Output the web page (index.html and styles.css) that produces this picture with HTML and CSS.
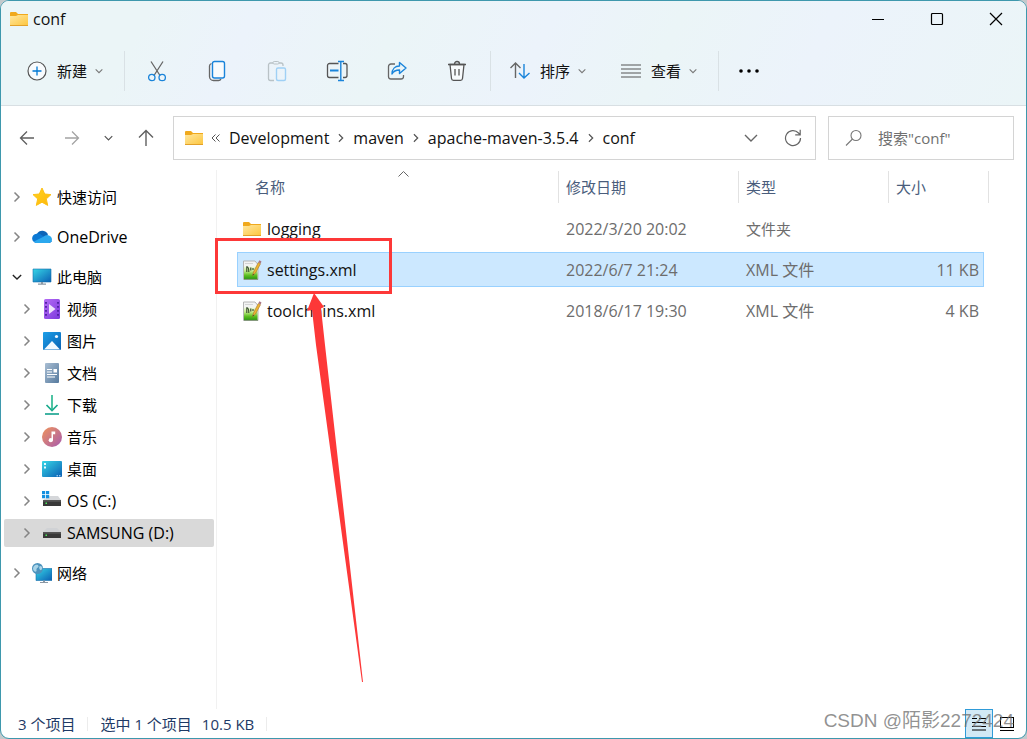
FILE: index.html
```
<!DOCTYPE html>
<html lang="zh-CN">
<head>
<meta charset="utf-8">
<meta name="viewport" content="width=device-width, initial-scale=1">
<title>conf</title>
<link rel="stylesheet" href="styles.css">
</head>
<body>
<svg class="defs" width="0" height="0" aria-hidden="true">
  <defs>
    <linearGradient id="gFolder" x1="0" y1="0" x2="1" y2="1"><stop offset="0" stop-color="#ffe7a0"/><stop offset="1" stop-color="#fdc63e"/></linearGradient>
    <linearGradient id="gStar" x1="0" y1="0" x2="1" y2="1"><stop offset="0" stop-color="#ffd51f"/><stop offset="1" stop-color="#feb50c"/></linearGradient>
    <linearGradient id="gScreen" x1="0" y1="0" x2="1" y2="1"><stop offset="0" stop-color="#36d6e6"/><stop offset="1" stop-color="#0b5fb4"/></linearGradient>
    <linearGradient id="gVideo" x1="0" y1="0" x2="1" y2="1"><stop offset="0" stop-color="#b56cf5"/><stop offset="1" stop-color="#7b38dc"/></linearGradient>
    <linearGradient id="gPic" x1="0" y1="0" x2="1" y2="1"><stop offset="0" stop-color="#1d9fe8"/><stop offset="1" stop-color="#0962b4"/></linearGradient>
    <linearGradient id="gDoc" x1="0" y1="0" x2="1" y2="1"><stop offset="0" stop-color="#a9bed3"/><stop offset="1" stop-color="#567a9e"/></linearGradient>
    <linearGradient id="gMusic" x1="0" y1="0" x2="1" y2="1"><stop offset="0" stop-color="#f0945a"/><stop offset="1" stop-color="#a75bb0"/></linearGradient>
    <linearGradient id="gGrass" x1="0" y1="0" x2="0" y2="1"><stop offset="0" stop-color="#eff8e0"/><stop offset="0.350" stop-color="#c3ea8c"/><stop offset="0.700" stop-color="#5fc022"/><stop offset="1" stop-color="#2c9a10"/></linearGradient>
    <symbol id="folder" viewBox="0 0 18 14"><path d="M0 1a1 1 0 0 1 1-1h5l2 2h10v4H0z" fill="#f0a91d"/><path d="M0 4h6l2-1h10v10.500H0z" fill="url(#gFolder)"/><path d="M0 13h18v1H0z" fill="#e2a12a"/></symbol>
    <symbol id="right" viewBox="0 0 10 12"><path d="M2.500 1.500 7 6l-4.500 4.500" fill="none" stroke="currentColor" stroke-width="1.500"/></symbol>
    <symbol id="down" viewBox="0 0 12 8"><path d="M1 1.500 6 6.500l5-5" fill="none" stroke="currentColor" stroke-width="1.600"/></symbol>
    <symbol id="xml" viewBox="0 0 20 20"><path d="M1.500 1h11.500l3 3.500V19.500H1.500z" fill="#f3f3f3" stroke="#b5b5b5"/><path d="M2 6.500h13.500v12.500H2z" fill="url(#gGrass)"/><path d="M2 19.300h14" stroke="#6b8b60" stroke-width=".8"/><path d="M3 3.500h8" stroke="#ccc" stroke-width=".8"/><path d="M4.800 12V6.800c2 0 2 2 2 5.200M8.800 7.500v3M11 8v2" stroke="#33482a" stroke-width="1.100" fill="none"/><path d="m10.500 15.500 1-3.500L16.300 2.500l2.200 1.200-5 9.300z" fill="#eeb533" stroke="#a87628" stroke-width=".6"/><path d="m16.200 2.300 1.300-2 2 1.100-.9 2.200z" fill="#a97786"/><path d="m10.500 15.500.6-1.800 1 .6z" fill="#333"/></symbol>
    <symbol id="drive" viewBox="0 0 20 20"><path d="M5 5h10l4 4H1z" fill="#d0d2d5"/><path d="M1 9h18v6H1z" fill="#393939"/><path d="M1 9h18v1.800H1z" fill="#555"/><path d="M3.500 11.500H5V13H3.500z" fill="#4dec5c"/></symbol>
  </defs>
</svg>
<div class="window">
  <header class="chrome">
    <div class="titlebar">
      <svg class="folder"><use href="#folder"/></svg>
      <h1 class="title">conf</h1>
      <div class="controls">
        <button aria-label="最小化"><svg width="14" height="14"><path d="M1 7.500h12" stroke="#000"/></svg></button>
        <button aria-label="最大化"><svg width="14" height="14"><rect x="1.500" y="1.500" width="11" height="11" rx="1" fill="none" stroke="#000" stroke-width="1.200"/></svg></button>
        <button aria-label="关闭"><svg width="14" height="14"><path d="m1 1 12 12M13 1 1 13" stroke="#000" stroke-width="1.200"/></svg></button>
      </div>
    </div>
    <div class="toolbar">
      <button class="command"><svg width="20" height="20" fill="none"><circle cx="10" cy="10" r="9" fill="#f8fbfd" stroke="#555" stroke-width="1.200"/><path d="M10 5.500v9M5.500 10h9" stroke="#0078d4" stroke-width="1.300"/></svg><span>新建</span><svg class="caret"><use href="#down"/></svg></button>
      <div class="tools">
        <button aria-label="剪切"><svg width="20" height="22" fill="none"><path d="m4 1.500 9 14M16 1.500 7 15.500" stroke="#666" stroke-width="1.300"/><circle cx="4.800" cy="17.500" r="3.200" stroke="#1a84da" stroke-width="1.300"/><circle cx="15.200" cy="17.500" r="3.200" stroke="#1a84da" stroke-width="1.300"/></svg></button>
        <button aria-label="复制"><svg width="18" height="22" fill="none"><path d="M3.500 3.500C2 4 1.500 5 1.500 6v10.500a4 4 0 0 0 4 4h5c1 0 2-.5 2.500-1.500" stroke="#666" stroke-width="1.300"/><rect x="4.500" y="1.500" width="12" height="16.500" rx="2" fill="#f8fbfd" stroke="#1a84da" stroke-width="1.400"/></svg></button>
        <button aria-label="粘贴"><svg width="20" height="22" fill="none"><path d="M6 3H3.500a2 2 0 0 0-2 2v13.500a2 2 0 0 0 2 2H7M12 3h2a2 2 0 0 1 2 2v1" stroke="#b9c2c6" stroke-width="1.300"/><rect x="6" y="1.500" width="6" height="2.500" rx="1.200" stroke="#b9c2c6"/><rect x="9.500" y="8" width="9" height="12.500" rx="1.500" stroke="#9fd0f5" stroke-width="1.400"/></svg></button>
        <button aria-label="重命名"><svg width="22" height="22" fill="none"><path d="M12.500 3.500H3.500a2 2 0 0 0-2 2v10a2 2 0 0 0 2 2h9M17 3.500h2a2 2 0 0 1 2 2v10a2 2 0 0 1-2 2h-2" stroke="#555" stroke-width="1.300"/><path d="M4 10.500h8.500" stroke="#1a84da" stroke-width="2"/><path d="M12 1.500h6M12 20.500h6M14.800 1.500v19" stroke="#1a84da" stroke-width="1.400"/></svg></button>
        <button aria-label="共享"><svg width="20" height="22" fill="none"><path d="M8 4H4a2.500 2.500 0 0 0-2.500 2.500v10A2.500 2.500 0 0 0 4 19h10a2.500 2.500 0 0 0 2.500-2.500V15" stroke="#666" stroke-width="1.300"/><path d="M12.500 2.500 19 8l-6.500 5.500V10C9 10 6.500 11 5 14c0-5 3-8 7.500-8z" stroke="#1a84da" stroke-width="1.400" stroke-linejoin="round"/></svg></button>
        <button aria-label="删除"><svg width="20" height="22" fill="none"><path d="M3 4.500h14l-1.500 14a2 2 0 0 1-2 1.800h-7a2 2 0 0 1-2-1.800z" fill="#f8fbfd" stroke="#555" stroke-width="1.300"/><path d="M1 4.500h18M7.500 4a2.500 2.500 0 0 1 5 0M8 9v6.500M12 9v6.500" stroke="#555" stroke-width="1.300"/></svg></button>
      </div>
      <div class="menus">
        <button class="command"><svg width="20" height="20" fill="none"><path d="M5.500 17V2M.500 7l5-5 5 5" stroke="#666" stroke-width="1.400"/><path d="M14 3v14M9 12l5 5 5.500-5" stroke="#1a84da" stroke-width="1.400"/></svg><span>排序</span><svg class="caret"><use href="#down"/></svg></button>
        <button class="command"><svg width="20" height="20"><path d="M0 4h20M0 8h20M0 12h20M0 16h20" stroke="#555" stroke-width="1.100"/></svg><span>查看</span><svg class="caret"><use href="#down"/></svg></button>
      </div>
      <button class="more" aria-label="更多"><svg width="20" height="6"><circle cx="2" cy="3" r="1.800"/><circle cx="10" cy="3" r="1.800"/><circle cx="18" cy="3" r="1.800"/></svg></button>
    </div>
  </header>

  <div class="navbar">
    <button class="wide" aria-label="后退"><svg width="16" height="16" fill="none"><path d="M15 8H1.500M8 1.500 1.500 8 8 14.500" stroke="#5f5f5f" stroke-width="1.300"/></svg></button>
    <button class="wide" aria-label="前进"><svg width="16" height="16" fill="none"><path d="M1 8h13.500M8 1.500 14.500 8 8 14.500" stroke="#a3a3a3" stroke-width="1.300"/></svg></button>
    <button class="narrow" aria-label="最近位置"><svg class="recent" width="9" height="6"><use href="#down"/></svg></button>
    <button class="wide" aria-label="向上"><svg width="16" height="18" fill="none"><path d="M8 17V1.500M1 8.500l7-7 7 7" stroke="#5f5f5f" stroke-width="1.400"/></svg></button>
    <div class="address">
      <svg class="folder"><use href="#folder"/></svg>
      <svg class="back-mark" width="9" height="8" fill="none"><path d="M4.500.5 1 4l3.500 3.500M8.500.5 5 4l3.500 3.500" stroke="#555"/></svg>
      <nav class="crumbs" aria-label="路径">
        <a href="#">Development</a><svg class="sep"><use href="#right"/></svg><a href="#">maven</a><svg class="sep"><use href="#right"/></svg><a href="#">apache-maven-3.5.4</a><svg class="sep"><use href="#right"/></svg><a href="#">conf</a>
      </nav>
      <button aria-label="历史记录"><svg width="14" height="9"><path d="m1 1 6 6 6-6" fill="none" stroke="#666" stroke-width="1.400"/></svg></button>
      <button aria-label="刷新"><svg width="18" height="18" fill="none"><path d="M16.500 9A7.500 7.500 0 1 1 14.500 4l1.500 1.500M16.200.8v5h-5" stroke="#666" stroke-width="1.200"/></svg></button>
    </div>
    <label class="search">
      <svg width="18" height="18" fill="none"><circle cx="11" cy="6.500" r="5" stroke="#777" stroke-width="1.100"/><path d="m7.500 10-6.500 6.500" stroke="#777" stroke-width="1.100"/></svg>
      <input type="text" placeholder="搜索&quot;conf&quot;" aria-label="搜索">
    </label>
  </div>

  <div class="content">
    <nav class="tree" aria-label="导航窗格">
      <a href="#"><svg class="arrow"><use href="#right"/></svg><svg class="icon" viewBox="0 0 20 20"><path d="m10 1 2.700 6 6.300.6-4.700 4.300 1.400 6.500L10 15.200l-5.700 3.200 1.400-6.500L1 7.600 7.300 7z" fill="url(#gStar)" stroke="#fdc016" stroke-linejoin="round"/></svg><span>快速访问</span></a>
      <a href="#" class="latin"><svg class="arrow"><use href="#right"/></svg><svg class="icon" viewBox="0 0 20 20"><path d="M5 7a6 6 0 0 1 11 1l-5 6H3z" fill="#0b64b8"/><path d="M4.500 6.800c2-.5 3.500 0 5 1.200L20 14c-.8 1.500-2 2-3.500 2H5a4.600 4.600 0 0 1-.5-9.200z" fill="#0c79d4"/><path d="M2 14.500 11.500 9.800c2-1.800 4-1.800 5.500-1.300 3 1 3.500 4 2.500 5.800-.7 1.200-1.700 1.700-3 1.700H5c-1.300 0-2.200-.5-3-1.500z" fill="#2ba8ee"/></svg><span>OneDrive</span></a>
      <a href="#" class="open"><svg class="arrow"><use href="#down"/></svg><svg class="icon" viewBox="0 0 20 20"><path d="M1 2h18v13H1z" fill="url(#gScreen)" stroke="#1671ac" stroke-width=".6"/><path d="M9 15h2v2H9zM6 16.500h8v1.300H6z" fill="#8a98a5"/></svg><span>此电脑</span></a>
      <div class="children">
        <a href="#"><svg class="arrow"><use href="#right"/></svg><svg class="icon" viewBox="0 0 20 20"><rect x="2" y="0" width="16" height="20" rx="1.500" fill="url(#gVideo)"/><path d="M4 3v15M16 3v15" stroke="#4b1f9e" stroke-width="1.800" stroke-dasharray="1.800 2.200"/><path d="m7 5 6.500 5L7 15z" fill="#efe4fb"/></svg><span>视频</span></a>
        <a href="#"><svg class="arrow"><use href="#right"/></svg><svg class="icon" viewBox="0 0 20 20"><rect x="1" y="1" width="18" height="18" rx="1" fill="url(#gPic)"/><path d="M2 18.500 10 10l8 8.500z" fill="#f2f9ff"/><circle cx="14.500" cy="5.500" r="1.600" fill="#f2f9ff"/></svg><span>图片</span></a>
        <a href="#"><svg class="arrow"><use href="#right"/></svg><svg class="icon" viewBox="0 0 20 20"><rect x="3" y="0" width="14" height="20" rx="1" fill="url(#gDoc)"/><path d="M5 6.500h5M5 9h5M5 11.500h10M5 14h8" stroke="#fff" stroke-width="1.100"/><path d="M11.500 6H15v3.500h-3.500z" fill="#fff"/></svg><span>文档</span></a>
        <a href="#"><svg class="arrow"><use href="#right"/></svg><svg class="icon" viewBox="0 0 20 20"><path d="M4.500 10l5.500 5.500 5.500-5.500" fill="none" stroke="#1aab8c" stroke-width="1.700"/><path d="M9.200 0h1.600v15H9.200z" fill="#22b58c"/><path d="M3 18.200h14v1.600H3z" fill="#12a08c"/></svg><span>下载</span></a>
        <a href="#"><svg class="arrow"><use href="#right"/></svg><svg class="icon" viewBox="0 0 20 20"><circle cx="10" cy="10" r="10" fill="url(#gMusic)"/><circle cx="8.800" cy="13.200" r="2.100" fill="#fff"/><path d="M9.500 13.500V4.500h3.700v2.800H11v6z" fill="#fff"/></svg><span>音乐</span></a>
        <a href="#"><svg class="arrow"><use href="#right"/></svg><svg class="icon" viewBox="0 0 20 20"><rect x="0" y="2" width="20" height="16" rx="1" fill="url(#gScreen)"/><path d="M2 4h2v2H2zM2 7.500h2v2H2z" fill="#e5fbff"/><path d="M14.500 16.800H16M17 16.800h1.500" stroke="#cfe9ff"/></svg><span>桌面</span></a>
        <a href="#" class="latin"><svg class="arrow"><use href="#right"/></svg><svg class="icon" viewBox="0 0 20 20"><path d="M8 5h8l3 4H1z" fill="#d5d7da"/><path d="M1 9h18v6H1z" fill="#393939"/><path d="M1 9h18v1.800H1z" fill="#555"/><path d="M3.500 11.500H5V13H3.500z" fill="#4dec5c"/><path d="M0 0h3.200v3.200H0zM4 0h3.200v3.200H4zM0 4h3.200v3.200H0zM4 4h3.200v3.200H4z" fill="#1590e0"/></svg><span>OS (C:)</span></a>
        <a href="#" class="latin selected" aria-current="true"><svg class="arrow"><use href="#right"/></svg><svg class="icon"><use href="#drive"/></svg><span>SAMSUNG (D:)</span></a>
      </div>
      <a href="#"><svg class="arrow"><use href="#right"/></svg><svg class="icon" viewBox="0 0 20 20"><path d="M4 5.500h16v12H4z" fill="url(#gScreen)" stroke="#1671ac" stroke-width=".6"/><path d="M11 17.500h2V19h-2zM8 19h8v1H8z" fill="#8a98a5"/><circle cx="5.500" cy="5.500" r="5.500" fill="#4d93bd"/><path d="M2 3c2-2 4-1.500 4.500 0S4 5 4.500 7 3 9 2 8 .5 5 2 3zM8 3c2 0 2.500 1.500 2 3S8 7.500 7.500 6 7 3.500 8 3z" fill="#a9d4e8"/></svg><span>网络</span></a>
    </nav>

    <main class="files">
      <table>
        <colgroup><col class="c-name"><col class="c-date"><col class="c-type"><col class="c-size"><col class="c-end"></colgroup>
        <thead>
          <tr>
            <th scope="col" aria-sort="ascending"><svg class="sort" width="11" height="6"><path d="m.5 5.500 5-5 5 5" fill="none" stroke="#666"/></svg><div>名称</div></th>
            <th scope="col"><div>修改日期</div></th>
            <th scope="col"><div>类型</div></th>
            <th scope="col"><div class="open-end">大小</div></th>
            <td><div></div></td>
          </tr>
        </thead>
        <tbody>
          <tr><td><div class="name"><svg class="folder"><use href="#folder"/></svg>logging</div></td><td>2022/3/20 20:02</td><td class="cjk">文件夹</td><td></td></tr>
          <tr class="selected"><td><div class="name"><svg class="file"><use href="#xml"/></svg>settings.xml</div></td><td>2022/6/7 21:24</td><td>XML 文件</td><td>11 KB</td></tr>
          <tr><td><div class="name"><svg class="file"><use href="#xml"/></svg>toolchains.xml</div></td><td>2018/6/17 19:30</td><td>XML 文件</td><td>4 KB</td></tr>
        </tbody>
      </table>
    </main>
  </div>

  <footer class="status">
    <span class="count">3 个项目</span>
    <span class="picked"><span>选中 1 个项目</span><span>10.5 KB</span></span>
    <div class="views">
      <button class="active" aria-label="详细信息"><svg width="16" height="14"><path d="M1 1.500h5M8 1.500h7M1 5.500h14M1 9.500h14M1 13h14" stroke="#000" stroke-width="1.100"/></svg></button>
      <button aria-label="大图标"><svg width="16" height="16" fill="none"><rect x="1.500" y="1.500" width="13" height="10" stroke="#000"/><path d="M1 14.500h14" stroke="#000"/></svg></button>
    </div>
  </footer>

  <svg class="annotation" width="400" height="700" aria-hidden="true">
    <rect x="216.500" y="239.500" width="174" height="53" fill="none" stroke="#fd3838" stroke-width="3"/>
    <path d="m314 293 10 14-3 1.500L325 345 363 682h-1L316 345l-4-35-5 1z" fill="#fd3838"/>
  </svg>
  <div class="watermark">CSDN @陌影2272424</div>
</div>
</body>
</html>
```
FILE: styles.css
```
* { box-sizing: border-box; }

body {
  margin: 0;
  background: #c3c9cc;
  color: #111;
  font-family: "Open Sans", "Noto Sans CJK SC", sans-serif;
  font-size: 15px;
  line-height: 20px;
}

svg { display: block; flex: none; }
.defs { position: absolute; }
a { color: inherit; text-decoration: none; }

button {
  display: flex;
  align-items: center;
  justify-content: center;
  padding: 0;
  border: 0;
  background: none;
  color: inherit;
  font: inherit;
}

.window {
  position: relative;
  display: flex;
  flex-direction: column;
  min-height: 100vh;
  overflow: hidden;
  border: 1px solid #3e98ad;
  border-radius: 9px;
  background: #fff;
}

.chrome {
  border-bottom: 1px solid #d8dfe3;
  background: linear-gradient(115deg, #ebf5f7 0%, #ebf5f7 14%, #ecf3fb 24%, #ebf5f7 38%, #ecf3fb 52%, #ebf5f7 64%, #ecf3fb 78%, #ebf5f7 100%);
}

.titlebar {
  display: flex;
  align-items: center;
  gap: 5px;
  height: 36px;
  padding: 0 1px 0 9px;
}

.folder { width: 18px; height: 14px; }
.title { margin: 0; font-size: 16px; font-weight: 400; }

.controls {
  display: flex;
  align-self: stretch;
  margin-left: auto;
}
.controls button { width: 59px; }

.toolbar {
  display: flex;
  align-items: center;
  height: 68px;
  padding-left: 26px;
}

.command { gap: 10px; }
.caret { width: 8px; height: 6px; margin-left: -2px; color: #777; }

.tools {
  display: flex;
  height: 40px;
  margin-left: 21px;
  padding: 0 3px 0 2px;
  border-left: 1px solid #d9e1e5;
  border-right: 1px solid #d9e1e5;
}
.tools button { width: 60px; }

.menus {
  display: flex;
  gap: 35px;
  height: 40px;
  padding: 0 21px 0 19px;
  border-right: 1px solid #d9e1e5;
}

.more { width: 60px; height: 40px; }

.navbar {
  display: flex;
  align-items: center;
  padding: 10px 12px 5px 3px;
}
.navbar .wide { width: 45px; height: 40px; }
.navbar .narrow { width: 29px; height: 40px; color: #555; }

.address,
.search {
  display: flex;
  align-items: center;
  height: 44px;
  border: 1px solid #d4d4d4;
}

.address {
  flex: 1;
  min-width: 0;
  margin-left: 5px;
  padding: 0 2px 0 11px;
  font-size: 16px;
}
.back-mark { margin: 0 9px 0 8px; }
.crumbs { display: flex; align-items: center; gap: 7px; margin-right: auto; white-space: nowrap; }
.sep { width: 10px; height: 10px; color: #555; }
.address button { width: 44px; height: 40px; }
.address button:last-child { width: 40px; }

.search {
  gap: 15px;
  width: 186px;
  margin-left: 12px;
  padding-left: 16px;
}
.search input {
  width: 100%;
  min-width: 0;
  padding: 0;
  border: 0;
  outline: 0;
  background: none;
  font: inherit;
}
.search input::placeholder { color: #707070; opacity: 1; }

.content {
  display: flex;
  flex: 1;
  padding-top: 5px;
}

.tree {
  display: flex;
  flex-direction: column;
  flex: none;
  gap: 12px;
  width: 216px;
  padding: 13px 2px 8px 3px;
  border-right: 1px solid #f1f1f1;
  color: #000;
}
.tree a {
  display: flex;
  align-items: center;
  gap: 5px;
  height: 28px;
  padding-left: 8px;
  border-radius: 2px;
}
.tree .latin { font-size: 16px; }
.tree .icon { width: 20px; height: 20px; }
.tree .arrow { width: 10px; height: 12px; margin-right: 5px; color: #858585; }
.tree .open .arrow { height: 8px; color: #222; }
.tree .selected { background: #d9d9d9; }

.children {
  display: flex;
  flex-direction: column;
  gap: 4px;
  margin-top: -8px;
}
.children a { padding-left: 18px; }

.files { flex: 1; min-width: 0; padding-left: 20px; }

table {
  width: 752px;
  margin-top: -5px;
  border-spacing: 0 6px;
  table-layout: fixed;
}
.c-name { width: 322px; }
.c-date { width: 180px; }
.c-type { width: 150px; }
.c-size { width: 95px; }
.c-end { width: 5px; }

th, td { padding: 0; text-align: left; font-weight: 400; }
thead th, thead td { position: relative; height: 34px; vertical-align: top; }
thead div {
  height: 32px;
  padding-left: 7px;
  border-right: 1px solid #e2e2e2;
  color: #4a5d7c;
  line-height: 32px;
}
thead th:first-child div { padding-left: 18px; }
thead td div { padding: 0; }
thead .open-end { border: 0; }
.sort { position: absolute; top: 0; left: 50%; }

tbody td {
  height: 35px;
  padding: 0 7px;
  border: solid transparent;
  border-width: 1px 0;
  color: #6d6d6d;
  font-size: 16px;
}
tbody .cjk { font-size: 15px; }
tbody td:first-child { padding-left: 4px; border-left-width: 1px; color: #111; }
tbody td:nth-child(4) { padding-right: 4px; border-right-width: 1px; text-align: right; }
tbody .selected td { border-color: #99d1ff; background: #cce8ff; }

.name { display: flex; align-items: center; gap: 5px; }
.name .folder { width: 20px; }
.file { width: 20px; height: 20px; }

.status {
  display: flex;
  align-items: center;
  height: 29px;
  padding: 0 5px 0 17px;
  color: #1e3a66;
}
.status .count { padding-right: 12px; border-right: 1px solid #ececec; line-height: 14px; }
.status .picked { display: flex; gap: 10px; padding: 0 12px; border-right: 1px solid #ececec; line-height: 14px; }
.views { display: flex; align-self: stretch; margin-left: auto; }
.views button { width: 28px; }
.views .active { border: 1px solid #2f9bd8; background: #d2e9f5; }

.annotation { position: absolute; top: -1px; left: -1px; pointer-events: none; }

.watermark {
  position: absolute;
  right: 12px;
  bottom: 5px;
  color: rgba(110, 110, 110, 0.75);
  font-family: "Liberation Sans", "Noto Sans CJK SC", sans-serif;
  font-size: 19px;
  line-height: 24px;
  pointer-events: none;
}
```
